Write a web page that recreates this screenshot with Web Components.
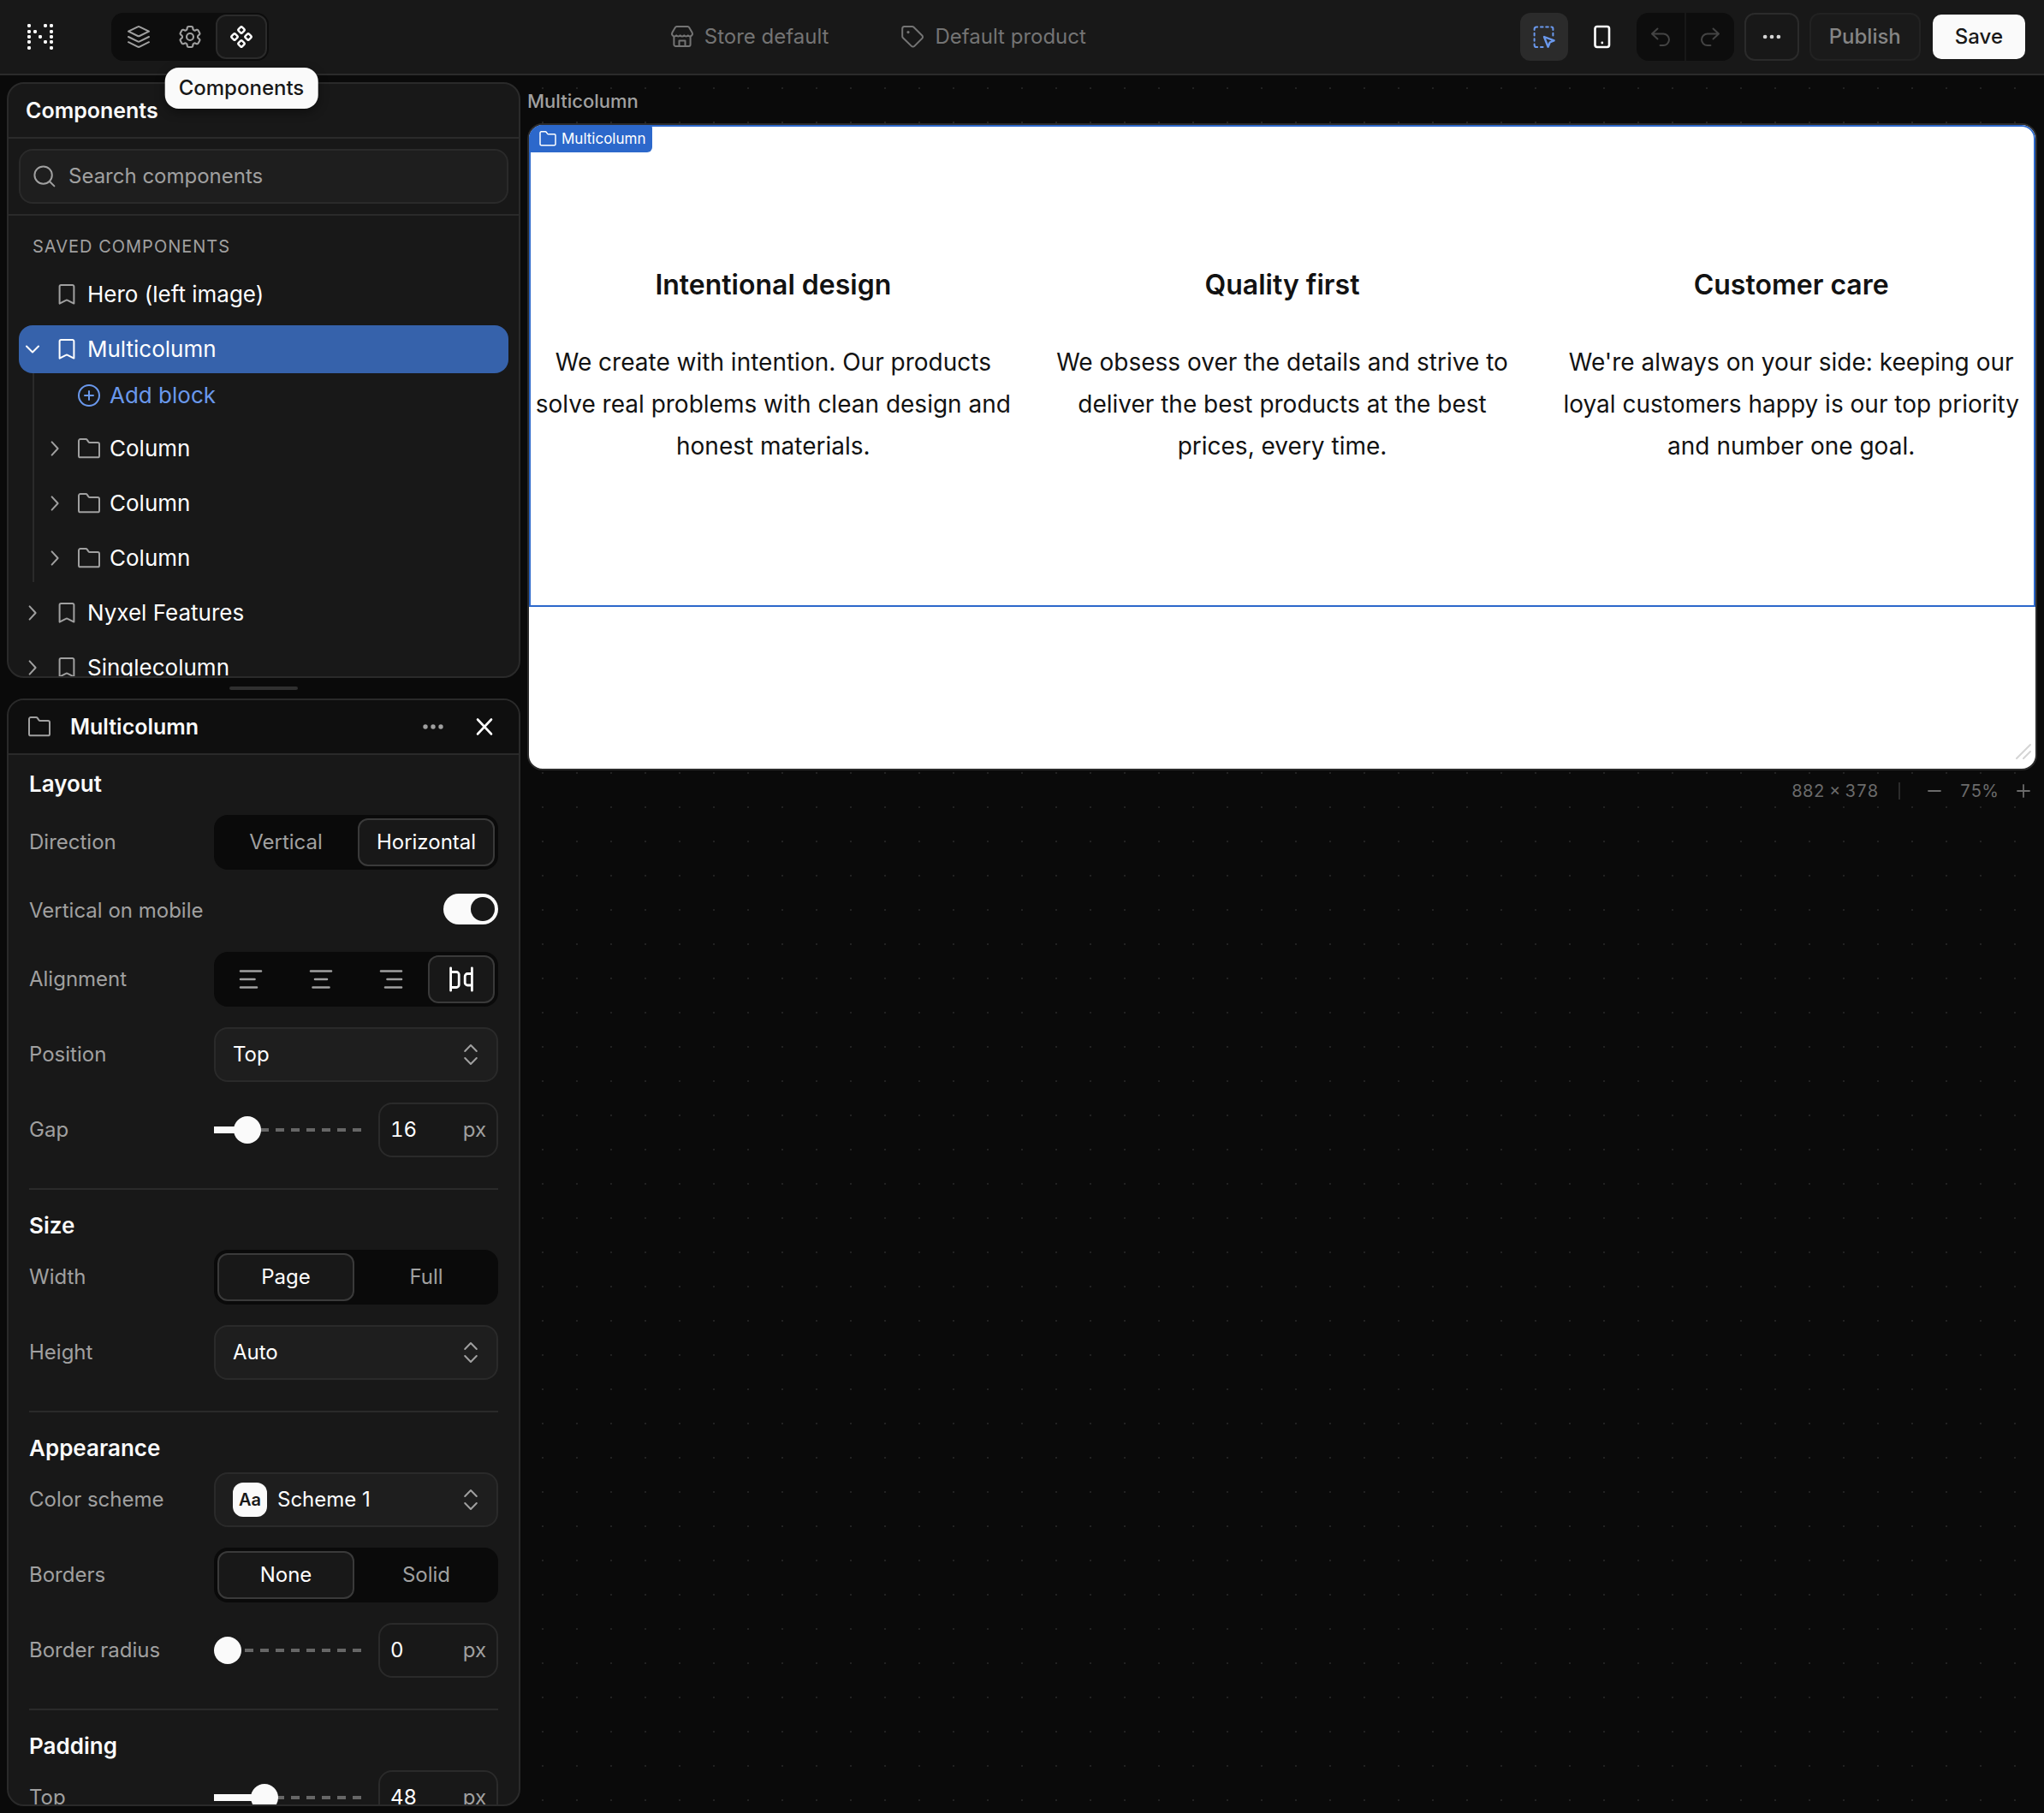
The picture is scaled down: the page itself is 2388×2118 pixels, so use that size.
<!DOCTYPE html>
<html lang="en">
<head>
<meta charset="utf-8">
<title>Theme editor</title>
<style>
  html, body {
    margin: 0;
    height: 100%;
  }

  body {
    background: #0a0a0a;
    color: #fafafa;
    font-family: Inter, "Liberation Sans", sans-serif;
    font-size: 24px;
    line-height: 32px;
    overflow: hidden;
  }
</style>
</head>
<body>
<theme-editor>
  <editor-bar slot="header"></editor-bar>

  <editor-panel slot="components" heading="Components">
    <search-box slot="tools" placeholder="Search components"></search-box>
    <component-tree heading="Saved components">
      <tree-item icon="bookmark" leaf>Hero (left image)</tree-item>
      <tree-item icon="bookmark" open selected>Multicolumn
        <tree-item slot="children" icon="plus" action>Add block</tree-item>
        <tree-item slot="children" icon="folder">Column</tree-item>
        <tree-item slot="children" icon="folder">Column</tree-item>
        <tree-item slot="children" icon="folder">Column</tree-item>
      </tree-item>
      <tree-item icon="bookmark">Nyxel Features</tree-item>
      <tree-item icon="bookmark">Singlecolumn</tree-item>
    </component-tree>
  </editor-panel>

  <editor-panel slot="settings" heading="Multicolumn" icon="folder" closable>
    <settings-group heading="Layout">
      <segment-row label="Direction" options="Vertical,Horizontal" value="Horizontal"></segment-row>
      <toggle-row label="Vertical on mobile" checked></toggle-row>
      <segment-row label="Alignment" options="left,center,right,stretch" value="stretch" icons></segment-row>
      <select-row label="Position" options="Top,Center,Bottom"></select-row>
      <range-row label="Gap" value="16" max="96"></range-row>
    </settings-group>
    <settings-group heading="Size">
      <segment-row label="Width" options="Page,Full" value="Page"></segment-row>
      <select-row label="Height" options="Auto,Small,Medium,Large"></select-row>
    </settings-group>
    <settings-group heading="Appearance">
      <select-row label="Color scheme" options="Scheme 1,Scheme 2,Scheme 3" swatch></select-row>
      <segment-row label="Borders" options="None,Solid" value="None"></segment-row>
      <range-row label="Border radius" value="0" max="96"></range-row>
    </settings-group>
    <settings-group heading="Padding">
      <range-row label="Top" value="48" max="155"></range-row>
    </settings-group>
  </editor-panel>

  <preview-canvas slot="canvas" heading="Multicolumn" size="882 × 378" zoom="75%">
    <text-column heading="Intentional design">We create with intention. Our products solve real problems with clean design and honest materials.</text-column>
    <text-column heading="Quality first">We obsess over the details and strive to deliver the best products at the best prices, every time.</text-column>
    <text-column heading="Customer care">We're always on your side: keeping our loyal customers happy is our top priority and number one goal.</text-column>
  </preview-canvas>
</theme-editor>

<script>
// Every icon is drawn on a 32 unit grid, centred on 16,16
const ICONS = {
  logo: [[3, 3], [22, 3], [29, 3], [3, 10], [10, 10], [29, 10], [3, 16], [16, 16], [29, 16], [3, 22], [22, 22], [29, 22], [3, 29], [29, 29]]
    .map(([x, y]) => `<rect x="${x - 2}" y="${y - 2}" width="4" height="4" rx="1.4" fill="currentColor" stroke="none"/>`).join(''),
  layers: '<path d="M14.9 4.4a2.4 2.4 0 0 1 2.2 0L28 9.7 17.1 15a2.4 2.4 0 0 1-2.2 0L4 9.7Z"/><path d="m4 16 10.9 5.4a2.4 2.4 0 0 0 2.2 0L28 16"/><path d="m4 22.2 10.9 5.4a2.4 2.4 0 0 0 2.2 0L28 22.2"/>',
  gear: '<g transform="scale(1.3333)" stroke-width="1.6"><path d="M9.594 3.94c.09-.542.56-.94 1.11-.94h2.593c.55 0 1.02.398 1.11.94l.213 1.281c.063.374.313.686.645.87.074.04.147.083.22.127.325.196.72.257 1.075.124l1.217-.456a1.125 1.125 0 0 1 1.37.49l1.296 2.247a1.125 1.125 0 0 1-.26 1.431l-1.003.827c-.293.241-.438.613-.43.992a7.723 7.723 0 0 1 0 .255c-.008.378.137.75.43.991l1.004.827c.424.35.534.955.26 1.43l-1.298 2.247a1.125 1.125 0 0 1-1.369.491l-1.217-.456c-.355-.133-.75-.072-1.076.124a6.47 6.47 0 0 1-.22.128c-.331.183-.581.495-.644.869l-.213 1.281c-.09.543-.56.94-1.11.94h-2.594c-.55 0-1.019-.398-1.11-.94l-.213-1.281c-.062-.374-.312-.686-.644-.87a6.52 6.52 0 0 1-.22-.127c-.325-.196-.72-.257-1.076-.124l-1.217.456a1.125 1.125 0 0 1-1.369-.49l-1.297-2.247a1.125 1.125 0 0 1 .26-1.431l1.004-.827c.292-.24.437-.613.43-.991a6.932 6.932 0 0 1 0-.255c.007-.38-.138-.751-.43-.992l-1.004-.827a1.125 1.125 0 0 1-.26-1.43l1.297-2.247a1.125 1.125 0 0 1 1.37-.491l1.216.456c.356.133.751.072 1.076-.124.072-.044.146-.086.22-.128.332-.183.582-.495.644-.869l.214-1.28Z"/><circle cx="12" cy="12" r="3"/></g>',
  components: [[16, 8], [24, 16], [16, 24], [8, 16]]
    .map(([x, y]) => `<rect x="${x - 3}" y="${y - 3}" width="6" height="6" rx="1.2" transform="rotate(45 ${x} ${y})" stroke-width="2.4"/>`).join(''),
  store: '<path d="M9.6 4h12.8a2 2 0 0 1 1.7 1L27.6 11a3 3 0 0 1-.2 3.2 2.9 2.9 0 0 1-4.6.2 2.9 2.9 0 0 1-4.5 0 2.9 2.9 0 0 1-4.6 0 2.9 2.9 0 0 1-4.5 0 2.9 2.9 0 0 1-4.6-.2 3 3 0 0 1-.2-3.2L7.9 5a2 2 0 0 1 1.7-1Z"/><path d="M6.4 16v9a2 2 0 0 0 2 2h15.2a2 2 0 0 0 2-2v-9"/><path d="M12.5 27v-6.5h7V27"/>',
  tag: '<path d="M6.5 4h9.2a2.5 2.5 0 0 1 1.8.7l9.8 9.8a2.4 2.4 0 0 1 0 3.4l-9 9a2.4 2.4 0 0 1-3.4 0L5 17.2a2.5 2.5 0 0 1-.8-1.8V6.4A2.4 2.4 0 0 1 6.5 4Z"/><circle cx="11" cy="10.6" r="1.6" fill="currentColor" stroke="none"/>',
  inspect: '<path d="M4.6 8V7a2.6 2.6 0 0 1 2.6-2.6h1M12 4.4h2.6M18.2 4.4h2.6M24.4 4.4a2 2 0 0 1 2 2V8M26.4 11.8v2.6M4.6 11.8v2.6M4.6 18.2v2.6M4.6 24.6v.8A2.6 2.6 0 0 0 7.2 28h1M12 28h2.6"/><path d="m16 16 11.6 4.4-4.9 2.1-2.1 5.2Z" stroke-width="2.4"/>',
  phone: '<rect x="7.5" y="4" width="16.5" height="24" rx="2.4" stroke-width="2.6"/><circle cx="15.8" cy="23" r="1.4" fill="currentColor" stroke="none"/>',
  undo: '<path d="M12.5 6.5 6 12.5l6.5 6M6 12.5h13.2a6.8 6.8 0 0 1 0 13.6h-3.6"/>',
  redo: '<path d="m19.5 6.5 6.5 6-6.5 6M26 12.5H12.8a6.8 6.8 0 0 0 0 13.6h3.6"/>',
  dots: '<g fill="currentColor" stroke="none"><circle cx="7" cy="16" r="2.7"/><circle cx="16" cy="16" r="2.7"/><circle cx="25" cy="16" r="2.7"/></g>',
  search: '<circle cx="14.6" cy="14.6" r="10.2"/><path d="m22 22 5.4 5.4"/>',
  bookmark: '<path d="M9.4 5h13.2a1.8 1.8 0 0 1 1.8 1.8v19.8L17 22.8a2 2 0 0 0-2 0l-7.4 3.8V6.8A1.8 1.8 0 0 1 9.4 5Z"/>',
  folder: '<path d="M4 24.4V7a1.9 1.9 0 0 1 1.9-1.9h6.3a2 2 0 0 1 1.6.8l1.5 2.2a2 2 0 0 0 1.6.8h9.2a1.9 1.9 0 0 1 1.9 1.9v13.6a1.9 1.9 0 0 1-1.9 1.9H5.9A1.9 1.9 0 0 1 4 24.4Z"/>',
  plus: '<circle cx="16" cy="16" r="12"/><path d="M16 11v10M11 16h10"/>',
  right: '<path d="m12.6 8.4 7 7.6-7 7.6"/>',
  down: '<path d="m9 12.5 7 7 7-7"/>',
  updown: '<path d="m9.2 12 6.8-7 6.8 7M9.2 20l6.8 7 6.8-7"/>',
  close: '<path d="m8 7.5 16 17M24 7.5 8 24.5" stroke-width="2.6"/>',
  left: '<path d="M4 6.5h24M4 16h16.5M4 25.5h19" stroke-width="2.6"/>',
  center: '<path d="M4 6.5h24M9 16h14M6.5 25.5h19" stroke-width="2.6"/>',
  rightAlign: '<path d="M4 6.5h24M11.5 16H28M9 25.5h19" stroke-width="2.6"/>',
  stretch: '<path d="M3.6 2.8v26.4M3.6 7.5h6.6a3 3 0 0 1 3 3v12a3 3 0 0 1-3 3H3.6M28.4 2.8v26.4M28.4 9.5h-5.2a3 3 0 0 0-3 3v7.5a3 3 0 0 0 3 3h5.2" stroke-width="2.8"/>',
  minus: '<path d="M9 16h14" stroke-width="1.8"/>',
  add: '<path d="M9 16h14M16 9v14" stroke-width="1.8"/>',
};

// Base class: renders the template once the element is in the page
class BaseElement extends HTMLElement {
  connectedCallback() {
    if (this.shadowRoot) return;
    this.attachShadow({ mode: 'open' });
    this.shadowRoot.innerHTML = this.render();
  }

  attr(name) {
    return this.getAttribute(name) || '';
  }
}

class AppIcon extends BaseElement {
  render() {
    return `
      <style>
        :host { display: block; flex: none; width: var(--icon-size, 32px); height: var(--icon-size, 32px); }
        svg { display: block; width: 100%; height: 100%; }
      </style>
      <svg viewBox="0 0 32 32" fill="none" stroke="currentColor" stroke-width="2" stroke-linecap="round" stroke-linejoin="round" aria-hidden="true">${ICONS[this.attr('name')]}</svg>
    `;
  }
}

class ThemeEditor extends BaseElement {
  render() {
    return `
      <style>
        :host {
          display: grid;
          grid-template: auto minmax(0, 1fr) / auto minmax(0, 1fr);
          height: 100vh;
        }
        header { grid-column: 1 / -1; position: relative; z-index: 1; }
        aside {
          display: flex;
          flex-direction: column;
          box-sizing: border-box;
          width: 616px;
          padding: 8px;
        }
        .components { flex: 0 0 696px; min-height: 0; display: grid; }
        .settings { flex: 1; min-height: 0; display: grid; }
        .handle {
          width: 80px;
          height: 4px;
          margin: 10px auto;
          border-radius: 2px;
          background: #303030;
        }
        main { min-width: 0; display: grid; }
        ::slotted(*) { min-height: 0; }
      </style>
      <header><slot name="header"></slot></header>
      <aside>
        <div class="components"><slot name="components"></slot></div>
        <div class="handle"></div>
        <div class="settings"><slot name="settings"></slot></div>
      </aside>
      <main><slot name="canvas"></slot></main>
    `;
  }
}

class EditorBar extends BaseElement {
  render() {
    return `
      <style>
        :host {
          display: flex;
          align-items: center;
          box-sizing: border-box;
          height: 88px;
          padding: 0 20px 2px 31px;
          background: #181818;
          box-shadow: inset 0 -2px #2b2b2b;
        }
        button, a { font: inherit; color: inherit; }
        button {
          display: flex;
          align-items: center;
          justify-content: center;
          box-sizing: border-box;
          height: 56px;
          margin: 0;
          padding: 0;
          border: 2px solid transparent;
          border-radius: 12px;
          background: none;
        }
        .tabs {
          display: flex;
          margin-left: 67px;
          padding: 2px;
          border-radius: 14px;
          background: #0d0d0d;
          color: #a0a0a0;
        }
        .tabs button { position: relative; width: 60px; height: 52px; }
        .tabs .on { border-color: #2b2b2b; background: #181818; color: #fff; }
        .tip {
          position: absolute;
          top: 100%;
          left: 50%;
          transform: translateX(-50%);
          margin-top: 12px;
          padding: 8px 16px;
          border-radius: 16px;
          background: #fafafa;
          color: #181818;
          font-weight: 500;
          box-shadow: 0 4px 12px rgba(0, 0, 0, .4);
        }
        nav {
          flex: 1;
          display: flex;
          justify-content: center;
          gap: 82px;
          padding-right: 40px;
          color: #747474;
        }
        nav a { display: flex; align-items: center; gap: 10px; text-decoration: none; }
        .actions { display: flex; align-items: center; gap: 12px; font-weight: 500; }
        .square { width: 56px; }
        .inspect { background: #2b2b2b; color: #6a98ec; }
        .phone { color: #fff; }
        .history { display: flex; gap: 2px; border-radius: 14px; background: #0d0d0d; color: #444; }
        .history button:first-child { box-shadow: 2px 0 #181818; border-radius: 0; }
        .more { width: 64px; border-color: #2b2b2b; color: #d4d4d4; --icon-size: 28px; }
        .publish { padding: 0 21px; border-color: #222; background: #1a1a1a; color: #858585; }
        .save { padding: 0 26px; background: #fafafa; background-clip: padding-box; color: #181818; }
      </style>
      <app-icon name="logo"></app-icon>
      <div class="tabs">
        <button aria-label="Layers"><app-icon name="layers"></app-icon></button>
        <button aria-label="Settings"><app-icon name="gear"></app-icon></button>
        <button class="on" aria-labelledby="tip"><app-icon name="components"></app-icon><span class="tip" id="tip" role="tooltip">Components</span></button>
      </div>
      <nav>
        <a href="#store"><app-icon name="store"></app-icon>Store default</a>
        <a href="#product"><app-icon name="tag"></app-icon>Default product</a>
      </nav>
      <div class="actions">
        <button class="square inspect" aria-label="Inspect"><app-icon name="inspect"></app-icon></button>
        <button class="square phone" aria-label="Mobile preview"><app-icon name="phone"></app-icon></button>
        <div class="history">
          <button class="square" aria-label="Undo"><app-icon name="undo"></app-icon></button>
          <button class="square" aria-label="Redo"><app-icon name="redo"></app-icon></button>
        </div>
        <button class="more" aria-label="More"><app-icon name="dots"></app-icon></button>
        <button class="publish">Publish</button>
        <button class="save">Save</button>
      </div>
    `;
  }
}

class EditorPanel extends BaseElement {
  render() {
    const closable = this.hasAttribute('closable');
    return `
      <style>
        :host {
          display: flex;
          flex-direction: column;
          box-sizing: border-box;
          border: 2px solid #2a2a2a;
          border-radius: 20px;
          background: #181818;
          overflow: hidden;
        }
        header {
          flex: none;
          display: flex;
          align-items: center;
          gap: 20px;
          height: 62px;
          padding: 0 20px;
          border-bottom: 2px solid #2a2a2a;
        }
        header.dark { background: #0f0f0f; }
        header app-icon { color: #a0a0a0; }
        h2 { flex: 1; margin: 0; font-size: 25px; line-height: 34px; font-weight: 600; }
        button { display: flex; margin: 0; padding: 0 4px; border: 0; background: none; color: inherit; }
        .body { flex: 1; min-height: 0; overflow: auto; scrollbar-width: none; }
      </style>
      <header class="${closable ? 'dark' : ''}">
        ${closable ? `<app-icon name="${this.attr('icon')}"></app-icon>` : ''}
        <h2>${this.attr('heading')}</h2>
        ${closable ? `
          <button aria-label="More"><app-icon name="dots"></app-icon></button>
          <button aria-label="Close"><app-icon name="close" style="color: #fff"></app-icon></button>
        ` : ''}
      </header>
      <slot name="tools"></slot>
      <div class="body"><slot></slot></div>
    `;
  }
}

class SearchBox extends BaseElement {
  render() {
    return `
      <style>
        :host { display: block; flex: none; padding: 12px; border-bottom: 2px solid #2a2a2a; }
        label {
          display: flex;
          align-items: center;
          gap: 12px;
          box-sizing: border-box;
          height: 64px;
          padding: 0 12px;
          border: 2px solid #2a2a2a;
          border-radius: 16px;
          background: #1e1e1e;
          color: #a0a0a0;
        }
        input { flex: 1; min-width: 0; padding: 0; border: 0; outline: 0; background: none; font: inherit; color: #fff; }
        input::placeholder { color: #a0a0a0; opacity: 1; }
      </style>
      <label><app-icon name="search"></app-icon><input type="text" aria-label="${this.attr('placeholder')}" placeholder="${this.attr('placeholder')}"></label>
    `;
  }
}

class ComponentTree extends BaseElement {
  render() {
    return `
      <style>
        :host { display: flex; flex-direction: column; gap: 8px; padding: 20px 12px; }
        h3 {
          margin: 0 0 4px;
          padding-left: 16px;
          font-size: 20px;
          line-height: 32px;
          font-weight: 400;
          letter-spacing: 1px;
          text-transform: uppercase;
          color: #a0a0a0;
        }
      </style>
      <h3>${this.attr('heading')}</h3>
      <slot></slot>
    `;
  }
}

class TreeItem extends BaseElement {
  render() {
    const arrow = this.hasAttribute('open') ? 'down' : 'right';
    const blank = this.hasAttribute('leaf') || this.hasAttribute('action');
    return `
      <style>
        :host { display: block; }
        button {
          display: flex;
          align-items: center;
          gap: 8px;
          width: 100%;
          height: 56px;
          margin: 0;
          padding: 0;
          border: 0;
          border-radius: 16px;
          background: none;
          font: inherit;
          font-size: 26px;
          color: #fff;
          text-align: left;
        }
        app-icon { color: #a0a0a0; }
        .blank { visibility: hidden; }
        :host([selected]) button { background: #3662ab; }
        :host([selected]) app-icon { color: #fff; }
        :host([action]) button { height: 52px; }
        :host([action]) button, :host([action]) app-icon { color: #6a98ec; }
        .children {
          display: none;
          flex-direction: column;
          gap: 8px;
          margin-left: 16px;
          padding-left: 8px;
          border-left: 2px solid #2a2a2a;
        }
        :host([open]) .children { display: flex; }
      </style>
      <button>
        <app-icon name="${arrow}" class="${blank ? 'blank' : ''}"></app-icon>
        <app-icon name="${this.attr('icon')}"></app-icon>
        <span><slot></slot></span>
      </button>
      <div class="children"><slot name="children"></slot></div>
    `;
  }
}

class SettingsGroup extends BaseElement {
  render() {
    return `
      <style>
        :host {
          display: flex;
          flex-direction: column;
          gap: 24px;
          margin: 0 24px;
          padding-bottom: 36px;
          border-bottom: 2px solid #2a2a2a;
        }
        :host(:last-child) { border: 0; }
        h3 { margin: 26px 0 -12px; font-size: 26px; line-height: 32px; font-weight: 600; }
        :host(:first-child) h3 { margin: 18px 0 -4px; }
      </style>
      <h3>${this.attr('heading')}</h3>
      <slot></slot>
    `;
  }
}

// One line of the settings panel: label on the left, control on the right
class SettingRow extends BaseElement {
  render() {
    return `
      <style>
        :host { display: block; }
        .row { display: flex; align-items: center; justify-content: space-between; min-height: 48px; margin: 0; padding: 0; border: 0; }
        .name { color: #a0a0a0; }
        .control { flex: none; box-sizing: border-box; width: 332px; height: 64px; }
        input, select { margin: 0; font: inherit; color: inherit; outline: 0; }
        ${this.styles()}
      </style>
      ${this.control()}
    `;
  }
}

class SegmentRow extends SettingRow {
  styles() {
    return `
      .control { display: flex; gap: 4px; padding: 4px; border-radius: 16px; background: #0a0a0a; color: #a0a0a0; }
      .control label {
        flex: 1 1 0;
        display: flex;
        align-items: center;
        justify-content: center;
        border: 2px solid transparent;
        border-radius: 12px;
      }
      .control label:has(:checked) { border-color: #3a3a3a; background: #181818; color: #fff; }
      input { appearance: none; width: 0; height: 0; }
    `;
  }

  control() {
    const icons = this.hasAttribute('icons');
    const options = this.attr('options').split(',').map((option) => {
      const icon = option === 'right' ? 'rightAlign' : option;
      return `
        <label ${icons ? `aria-label="${option}"` : ''}>
          <input type="radio" name="segment" value="${option}" ${option === this.attr('value') ? 'checked' : ''}>
          ${icons ? `<app-icon name="${icon}"></app-icon>` : option}
        </label>`;
    });
    return `
      <div class="row" role="radiogroup" aria-labelledby="name">
        <span class="name" id="name">${this.attr('label')}</span>
        <div class="control">${options.join('')}</div>
      </div>
    `;
  }
}

class ToggleRow extends SettingRow {
  styles() {
    return `
      input {
        appearance: none;
        box-sizing: border-box;
        width: 64px;
        height: 36px;
        margin-bottom: 4px;
        padding: 4px;
        border-radius: 18px;
        background: #444;
      }
      input::before {
        content: "";
        display: block;
        width: 28px;
        height: 28px;
        border-radius: 50%;
        background: #181818;
      }
      input:checked { background: #fafafa; }
      input:checked::before { margin-left: auto; }
    `;
  }

  control() {
    return `
      <div class="row">
        <label class="name" for="field">${this.attr('label')}</label>
        <input type="checkbox" role="switch" id="field" ${this.hasAttribute('checked') ? 'checked' : ''}>
      </div>
    `;
  }
}

class SelectRow extends SettingRow {
  styles() {
    return `
      .control { display: grid; align-items: center; }
      .control > * { grid-area: 1 / 1; }
      select {
        appearance: none;
        width: 100%;
        height: 100%;
        padding: 0 20px;
        border: 2px solid #2a2a2a;
        border-radius: 16px;
        background: #1e1e1e;
        color: #fff;
      }
      .swatch + select { padding-left: 72px; }
      .swatch {
        z-index: 1;
        width: 40px;
        margin-left: 22px;
        border-radius: 12px;
        background: #fafafa;
        color: #181818;
        font-size: 20px;
        line-height: 40px;
        font-weight: 600;
        text-align: center;
        pointer-events: none;
      }
      app-icon { justify-self: end; margin-right: 16px; color: #a0a0a0; pointer-events: none; }
    `;
  }

  control() {
    return `
      <div class="row">
        <label class="name" for="field">${this.attr('label')}</label>
        <div class="control">
          ${this.hasAttribute('swatch') ? '<span class="swatch">Aa</span>' : ''}
          <select id="field">${this.attr('options').split(',').map((option) => `<option>${option}</option>`).join('')}</select>
          <app-icon name="updown"></app-icon>
        </div>
      </div>
    `;
  }
}

class RangeRow extends SettingRow {
  styles() {
    return `
      .control { display: flex; align-items: center; gap: 20px; }
      [type=range] {
        appearance: none;
        flex: 1;
        min-width: 0;
        height: 32px;
        background:
          linear-gradient(#fafafa, #fafafa) left center / var(--fill) 8px no-repeat,
          repeating-linear-gradient(90deg, #666 0 10px, transparent 10px 18px) left center / 100% 4px no-repeat;
      }
      [type=range]::-webkit-slider-thumb {
        appearance: none;
        width: 32px;
        height: 32px;
        border-radius: 50%;
        background: #fafafa;
        box-shadow: 0 0 0 4px var(--halo, transparent);
      }
      .number {
        display: flex;
        align-items: center;
        box-sizing: border-box;
        width: 140px;
        height: 64px;
        padding: 0 12px;
        border: 2px solid #2a2a2a;
        border-radius: 16px;
        color: #a0a0a0;
      }
      .number input {
        flex: 1;
        min-width: 0;
        padding: 0;
        border: 0;
        background: none;
        color: #fff;
        font-variant-numeric: tabular-nums;
      }
      [type=range].zero { --halo: #181818; }
    `;
  }

  control() {
    const value = Number(this.attr('value'));
    const fill = Math.round((value / Number(this.attr('max'))) * 100);
    return `
      <div class="row">
        <label class="name" for="field">${this.attr('label')}</label>
        <div class="control">
          <input type="range" class="${value ? '' : 'zero'}" style="--fill: ${fill}%" min="0" max="${this.attr('max')}" value="${value}" aria-label="${this.attr('label')} slider">
          <div class="number"><input type="text" inputmode="numeric" id="field" value="${value}"><span>px</span></div>
        </div>
      </div>
    `;
  }
}

class PreviewCanvas extends BaseElement {
  render() {
    return `
      <style>
        :host {
          display: block;
          padding: 16px 8px 0 0;
          background: conic-gradient(at 2px 2px, transparent 75%, #222 0) 17px 14px / 40px 40px;
        }
        h1 { margin: 0 0 12px; font-size: 22px; line-height: 28px; font-weight: 500; color: #a0a0a0; }
        .frame {
          position: relative;
          box-sizing: border-box;
          aspect-ratio: 7 / 3;
          border: 2px solid #2b2b2b;
          border-radius: 18px;
          background: #fff;
          overflow: hidden;
          color: #121212;
        }
        .section {
          display: grid;
          grid-template-columns: repeat(3, minmax(0, 1fr));
          gap: 24px;
          padding: 165px 0 163px;
        }
        .outline {
          position: absolute;
          inset: 0;
          border: 2px solid #2c68cb;
          border-radius: 16px 16px 0 0;
          pointer-events: none;
        }
        .tag {
          position: absolute;
          top: 0;
          left: 0;
          display: flex;
          align-items: center;
          gap: 4px;
          padding: 0 8px 0 10px;
          height: 32px;
          border-radius: 0 4px 6px 0;
          background: #2c68cb;
          color: #fff;
          font-size: 17px;
          line-height: 20px;
          --icon-size: 24px;
        }
        .wrap { position: relative; }
        .grip { position: absolute; right: 4px; bottom: 10px; width: 20px; height: 20px; }
        footer {
          display: flex;
          justify-content: flex-end;
          align-items: center;
          gap: 13px;
          padding-top: 8px;
          font-size: 20px;
          font-variant-numeric: tabular-nums;
          color: #6b6b6b;
        }
        .rule { width: 2px; height: 20px; margin: 0 11px; background: #2b2b2b; }
        button { display: flex; margin: 0; padding: 0; border: 0; background: none; color: inherit; }
      </style>
      <h1>${this.attr('heading')}</h1>
      <div class="frame">
        <div class="wrap">
          <div class="section"><slot></slot></div>
          <div class="outline"></div>
          <div class="tag"><app-icon name="folder"></app-icon>${this.attr('heading')}</div>
        </div>
        <svg class="grip" viewBox="0 0 20 20" stroke="#d4d4d4" stroke-width="2" stroke-linecap="round" aria-hidden="true"><path d="M2 18 18 2M10 18l8-8"/></svg>
      </div>
      <footer>
        <span>${this.attr('size')}</span>
        <span class="rule"></span>
        <button aria-label="Zoom out"><app-icon name="minus"></app-icon></button>
        <span>${this.attr('zoom')}</span>
        <button aria-label="Zoom in"><app-icon name="add"></app-icon></button>
      </footer>
    `;
  }
}

class TextColumn extends BaseElement {
  render() {
    return `
      <style>
        :host { display: block; text-align: center; }
        h2 { margin: 0 0 44px; font-size: 32px; line-height: 44px; font-weight: 600; }
        p { margin: 0; font-size: 28px; line-height: 49px; }
      </style>
      <h2>${this.attr('heading')}</h2>
      <p><slot></slot></p>
    `;
  }
}

customElements.define('app-icon', AppIcon);
customElements.define('theme-editor', ThemeEditor);
customElements.define('editor-bar', EditorBar);
customElements.define('editor-panel', EditorPanel);
customElements.define('search-box', SearchBox);
customElements.define('component-tree', ComponentTree);
customElements.define('tree-item', TreeItem);
customElements.define('settings-group', SettingsGroup);
customElements.define('segment-row', SegmentRow);
customElements.define('toggle-row', ToggleRow);
customElements.define('select-row', SelectRow);
customElements.define('range-row', RangeRow);
customElements.define('preview-canvas', PreviewCanvas);
customElements.define('text-column', TextColumn);
</script>
</body>
</html>
